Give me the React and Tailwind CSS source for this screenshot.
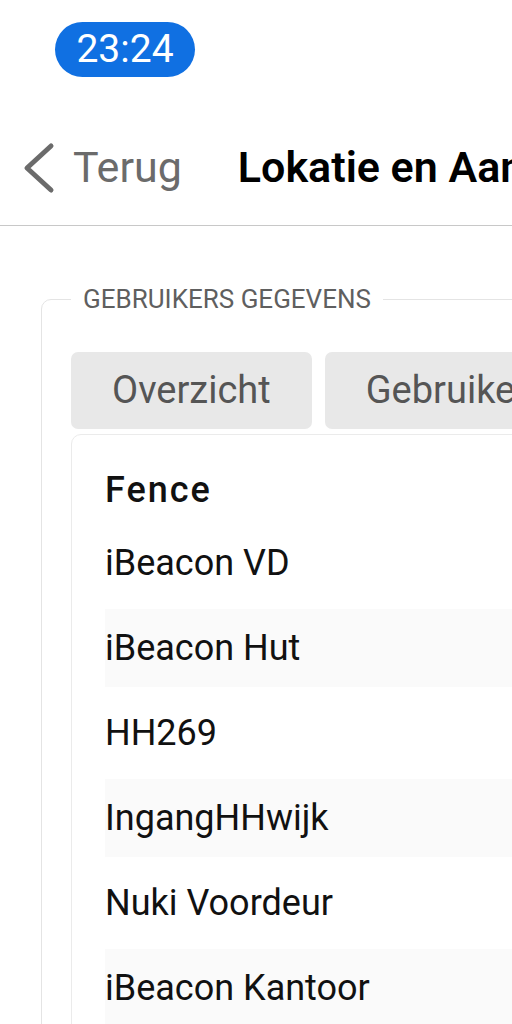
import React from "react";

const rows = [
  "iBeacon VD",
  "iBeacon Hut",
  "HH269",
  "IngangHHwijk",
  "Nuki Voordeur",
  "iBeacon Kantoor",
  "Achterdeur",
];

const App = () => {
  return (
    <div className="w-[512px] h-[1024px] overflow-hidden bg-white font-['Roboto',sans-serif]">
      {/* status bar */}
      <div className="h-[110px] pt-[22px] pl-[55px]">
        <div className="w-[140px] h-[55px] rounded-full bg-[#1070e2] flex items-center justify-center text-white text-[39px] leading-none">
          23:24
        </div>
      </div>

      {/* nav bar */}
      <div className="h-[116px] flex items-center border-b border-[#c8c8c8] pl-[22px] whitespace-nowrap">
        <svg width="34" height="52" viewBox="0 0 34 52" className="shrink-0">
          <polyline
            points="29,4 5,26 29,48"
            fill="none"
            stroke="#6b6b6b"
            strokeWidth="5"
            strokeLinecap="round"
            strokeLinejoin="round"
          />
        </svg>
        <span className="ml-[17px] text-[43px] text-[#6b6b6b]">Terug</span>
        <span className="ml-[56px] text-[43px] font-semibold text-black">
          Lokatie en Aanwezigheid
        </span>
      </div>

      {/* fieldset */}
      <fieldset className="ml-[41px] mt-[58px] w-[700px] border border-[#e4e4e4] rounded-[10px] pl-[29px] pt-[38px]">
        <legend className="px-[12px] text-[26px] leading-[30px] text-[#5f5f5f]">
          GEBRUIKERS GEGEVENS
        </legend>

        <div className="flex gap-[13px] whitespace-nowrap">
          <div className="h-[77px] px-[41px] rounded-[7px] bg-[#e8e8e8] flex items-center text-[38px] text-[#555555]">
            Overzicht
          </div>
          <div className="h-[77px] px-[41px] rounded-[7px] bg-[#e8e8e8] flex items-center text-[38px] text-[#555555]">
            Gebruikers
          </div>
        </div>

        <div className="mt-[5px] border border-[#ebebeb] rounded-tl-[10px] pl-[33px] pt-[34px] h-[700px]">
          <div className="text-[36px] leading-[42px] font-medium tracking-[2px] text-[#111111]">
            Fence
          </div>
          <div className="mt-[13px] flex flex-col gap-[7px]">
            {rows.map((r, i) => (
              <div
                key={r}
                className={
                  "h-[78px] flex items-center text-[36px] text-[#111111] whitespace-nowrap " +
                  (i % 2 === 1 ? "bg-[#fafafa]" : "bg-white")
                }
              >
                {r}
              </div>
            ))}
          </div>
        </div>
      </fieldset>
    </div>
  );
};

export default App;
